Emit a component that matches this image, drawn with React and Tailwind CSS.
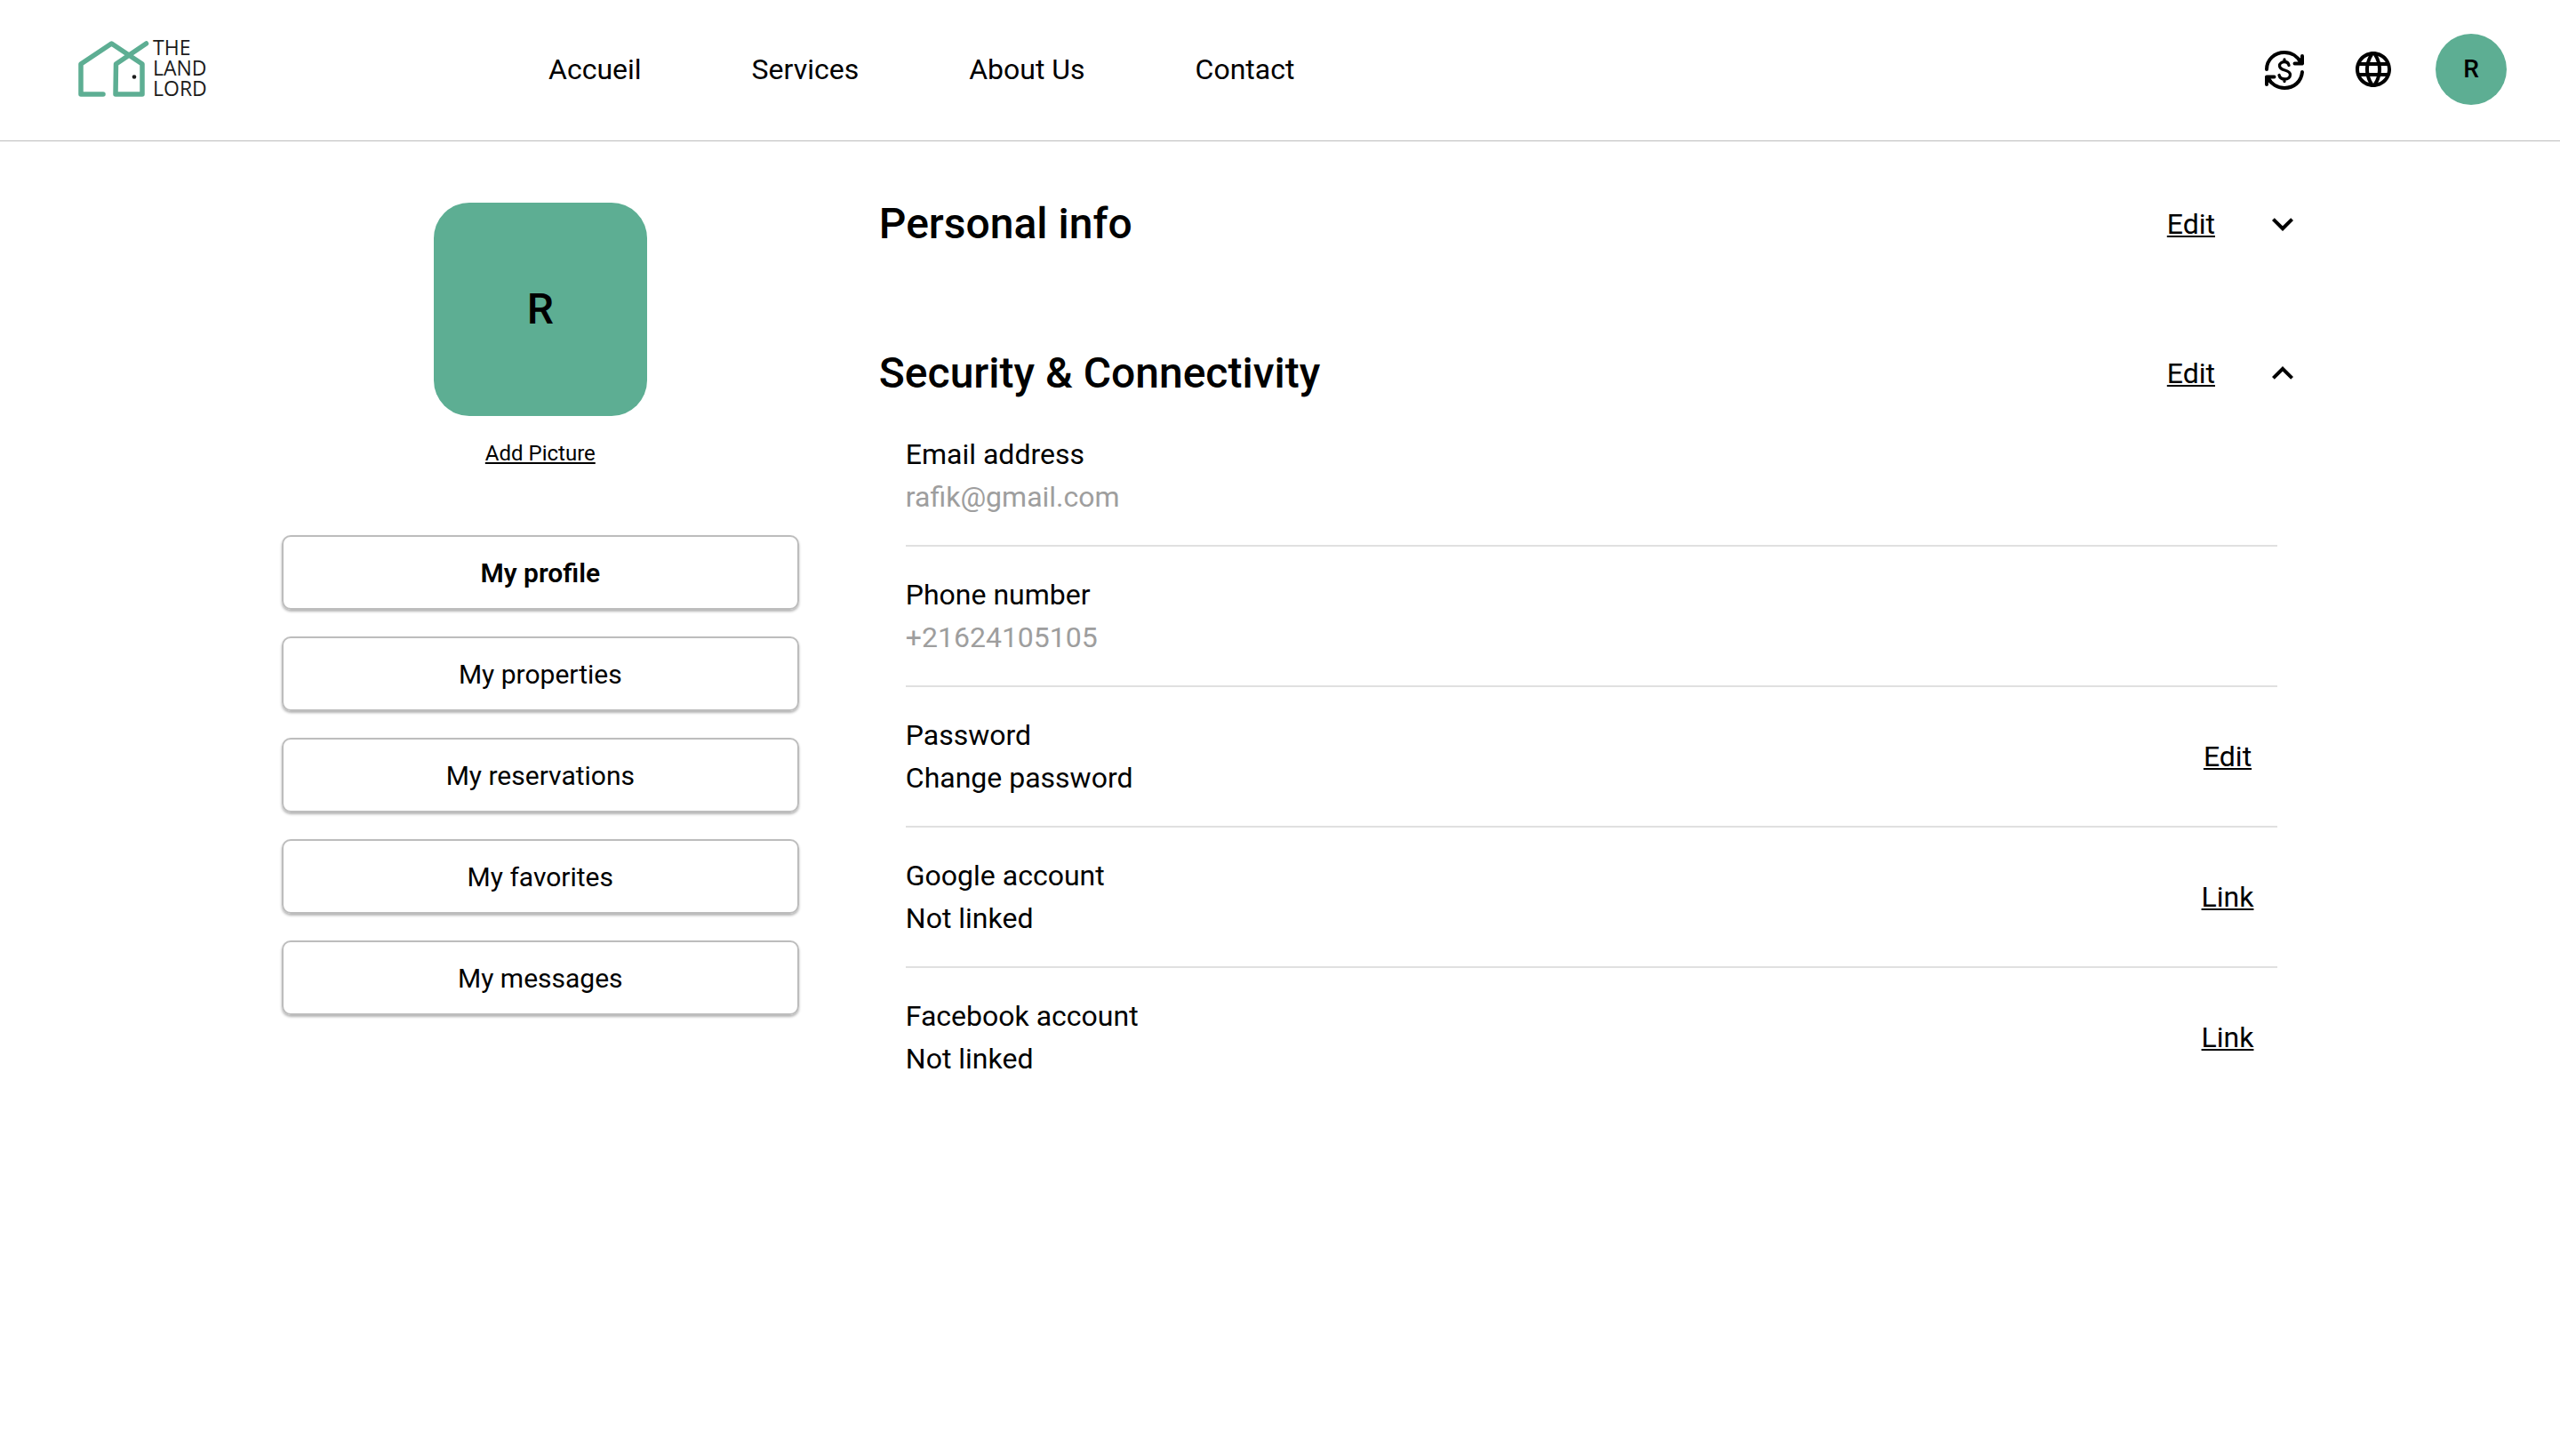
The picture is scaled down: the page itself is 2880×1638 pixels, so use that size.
import { useState } from "react";
import { MdLanguage, MdKeyboardArrowDown, MdKeyboardArrowUp } from "react-icons/md";

const NAV = ["Accueil", "Services", "About Us", "Contact"];
const MENU = ["My profile", "My properties", "My reservations", "My favorites", "My messages"];
const SECURITY = [
  { label: "Email address", value: "rafik@gmail.com", muted: true },
  { label: "Phone number", value: "+21624105105", muted: true },
  { label: "Password", value: "Change password", action: "Edit" },
  { label: "Google account", value: "Not linked", action: "Link" },
  { label: "Facebook account", value: "Not linked", action: "Link" },
];

function Logo() {
  return (
    <a href="#home" className="flex items-center gap-1">
      <svg viewBox="0 0 80 66" className="h-[66px] w-20" fill="none" aria-hidden="true">
        <g stroke="#5dae93" strokeWidth="5.500" strokeLinecap="round" strokeLinejoin="round">
          <path d="M28 61H3V27L37.500 4 72 27V61H42L42.500 27 76.500 4" />
        </g>
        <circle cx="63" cy="41.500" r="2.300" fill="#1c1c1c" />
      </svg>
      <span className="w-16 pb-1 font-['Open_Sans',sans-serif] text-[23px] leading-[23px] text-[#1c1c1c]">
        THE LAND LORD
      </span>
    </a>
  );
}

function CurrencyIcon() {
  return (
    <svg viewBox="0 0 48 48" className="size-12" fill="none" stroke="#000" strokeWidth="4" strokeLinecap="round" strokeLinejoin="round">
      <path d="M4 24C4 13 13 5 24 5c8 0 15 4.500 18.500 11.500" />
      <path d="M44 9v8.500h-8.500M44 17.500l-4-5" />
      <path d="M44 27C43 38 34.500 45 24 45c-8 0-15-4.500-18.500-11.500" />
      <path d="M4 41v-8.500h8.500M4 32.500l4 5" />
      <path d="M29 19.500c-.5-2.500-2.200-4-5-4s-5.500 1.800-5.500 4.500c0 6.500 12 3.500 12 10 0 3-2.500 5-6.200 5-3.300 0-5.600-1.700-6.300-4.500M24 13v2.500M24 35v2.500" strokeWidth="3.300" />
    </svg>
  );
}

function Section({ title, open, onToggle, children }) {
  const Chevron = open ? MdKeyboardArrowUp : MdKeyboardArrowDown;
  return (
    <section className="flex flex-col gap-[13px]">
      <div className="flex h-12 items-center">
        <h2 className="flex-1 text-[48px] leading-[48px] font-medium">{title}</h2>
        <button type="button" className="mr-[52px] text-[32px] leading-[46px] underline decoration-2 underline-offset-2">Edit</button>
        <button type="button" aria-label={"Toggle " + title} aria-expanded={open} onClick={onToggle}>
          <Chevron className="size-12" />
        </button>
      </div>
      {open && children}
    </section>
  );
}

export default function App() {
  const [infoOpen, setInfoOpen] = useState(false);
  const [securityOpen, setSecurityOpen] = useState(true);
  return (
    <div className="min-h-screen bg-white font-[Roboto,sans-serif] text-black">
      <header className="flex items-center border-b border-[#bdbdbd] pt-[38px] pr-[60px] pb-10 pl-[88px]">
        <Logo />
        <nav className="ml-[381px] flex gap-[124px] text-[32px] leading-12">
          {NAV.map((item) => (
            <a key={item} href="#nav">{item}</a>
          ))}
        </nav>
        <div className="ml-auto flex items-center">
          <button type="button" aria-label="Currency" className="mr-[52px]"><CurrencyIcon /></button>
          <button type="button" aria-label="Language" className="mr-[46px]"><MdLanguage className="size-12" /></button>
          <button type="button" className="size-20 rounded-full bg-[#5dae93] text-[28px] font-medium">R</button>
        </div>
      </header>

      <main className="flex items-start gap-[90px] pt-[69px] pr-[10%] pl-[11%]">
        <aside className="flex w-[582px] shrink-0 flex-col items-center">
          <div className="flex size-60 items-center justify-center rounded-[40px] bg-[#5dae93] text-[48px] font-medium">R</div>
          <button type="button" className="mt-6 text-[24px] leading-9 underline">Add Picture</button>
          <div className="mt-[74px] flex w-full flex-col gap-[30px]">
            {MENU.map((item, i) => (
              <button
                key={item}
                type="button"
                className={
                  "h-21 rounded-[10px] border-2 border-[#bdbdbd] text-[30px] shadow-[0_2px_3px_rgba(0,0,0,0.3)] " +
                  (i === 0 ? "font-semibold" : "font-normal")
                }
              >
                {item}
              </button>
            ))}
          </div>
        </aside>

        <div className="flex min-w-0 flex-1 flex-col gap-[120px]">
          <Section title="Personal info" open={infoOpen} onToggle={() => setInfoOpen(!infoOpen)} />
          <Section title="Security & Connectivity" open={securityOpen} onToggle={() => setSecurityOpen(!securityOpen)}>
            <dl className="mx-[30px] divide-y-2 divide-[#e0e0e0]">
              {SECURITY.map((row) => (
                <div key={row.label} className="flex items-center justify-between py-[30px] text-[32px] leading-12">
                  <div>
                    <dt>{row.label}</dt>
                    <dd className={row.muted ? "text-[#9e9e9e]" : ""}>{row.value}</dd>
                  </div>
                  {row.action && (
                    <button type="button" className="w-28 leading-[46px] underline decoration-2 underline-offset-2">{row.action}</button>
                  )}
                </div>
              ))}
            </dl>
          </Section>
        </div>
      </main>
    </div>
  );
}
